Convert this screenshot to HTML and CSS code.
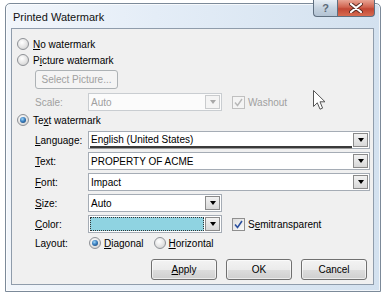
FILE: index.html
```html
<!DOCTYPE html>
<html>
<head>
<meta charset="utf-8">
<link rel="stylesheet" href="styles.css">
</head>
<body>
<div class="window">
  <div class="titlebar">
    <span class="title">Printed Watermark</span>
    <div class="caps">
      <span class="cap help">?</span>
      <span class="cap close"><svg width="14" height="10" viewBox="0 0 14 10"><path d="M2 1 L12 9 M12 1 L2 9" stroke="#5a2a22" stroke-width="4" stroke-linecap="round"/><path d="M2 1 L12 9 M12 1 L2 9" stroke="#fff" stroke-width="2.2" stroke-linecap="round"/></svg></span>
    </div>
  </div>
  <div class="client">
    <div class="radiorow"><span class="radio"></span><span><u>N</u>o watermark</span></div>
    <div class="radiorow"><span class="radio"></span><span>P<u>i</u>cture watermark</span></div>
    <div class="indent"><span class="btn disabled selbtn">Select Picture...</span></div>
    <div class="frow scale">
      <span class="lbl dim">Scale:</span>
      <span class="combo small dis"><span class="val">Auto</span><span class="drop"><i class="tri"></i></span></span>
      <span class="check dis"><svg width="9" height="9" viewBox="0 0 9 9"><path d="M1 4.5 L3.5 7.5 L8 1" fill="none" stroke="#b8b8b8" stroke-width="1.4"/></svg></span>
      <span class="dim">Washout</span>
    </div>
    <div class="radiorow tw"><span class="radio on"></span><span>Te<u>x</u>t watermark</span></div>
    <div class="form">
      <div class="frow"><span class="lbl"><u>L</u>anguage:</span><span class="combo wide"><span class="val lang">English (United States)</span><span class="drop"><i class="tri"></i></span></span></div>
      <div class="frow"><span class="lbl"><u>T</u>ext:</span><span class="combo wide"><span class="val">PROPERTY OF ACME</span><span class="drop"><i class="tri"></i></span></span></div>
      <div class="frow"><span class="lbl"><u>F</u>ont:</span><span class="combo wide"><span class="val">Impact</span><span class="drop"><i class="tri"></i></span></span></div>
      <div class="frow"><span class="lbl"><u>S</u>ize:</span><span class="combo small"><span class="val">Auto</span><span class="drop"><i class="tri"></i></span></span></div>
      <div class="frow"><span class="lbl"><u>C</u>olor:</span><span class="combo small"><span class="val color"><span class="swatch"></span></span><span class="drop"><i class="tri"></i></span></span>
        <span class="check"><svg width="9" height="9" viewBox="0 0 9 9"><path d="M1 4.5 L3.5 7.5 L8 1" fill="none" stroke="#2a4f9e" stroke-width="1.6"/></svg></span>
        <span>S<u>e</u>mitransparent</span>
      </div>
    </div>
    <div class="frow layout">
      <span class="lbl">Layout:</span>
      <span class="radio on"></span><span class="rl"><u>D</u>iagonal</span>
      <span class="radio h"></span><span class="rl"><u>H</u>orizontal</span>
    </div>
    <div class="buttons">
      <span class="btn"><u>A</u>pply</span>
      <span class="btn">OK</span>
      <span class="btn">Cancel</span>
    </div>
  </div>
</div>
<svg class="cursor" width="14" height="21" viewBox="0 0 14 21"><path d="M0.5 0.5 L0.5 16.5 L4.3 12.8 L7 19.2 L9.6 18.1 L7 11.8 L12 11.8 Z" fill="#fff" stroke="#555" stroke-width="1" stroke-linejoin="round"/></svg>
</body>
</html>
```
FILE: styles.css
```css
html, body { margin: 0; padding: 0; }
body {
  width: 384px; height: 296px; overflow: hidden; background: #fff;
  font-family: "Liberation Sans", Arial, sans-serif; font-size: 10px; color: #000;
  position: relative;
}
u { text-decoration: underline; text-underline-offset: 1px; }
.window {
  margin: 3px 0 0 5px; width: 363px; height: 287px;
  border: 1px solid #7c8a99; border-radius: 5px 5px 0 0;
  background: linear-gradient(to right, #f2f6fb 0%, #e4edf7 40%, #d3e1ef 100%);
  padding: 0 6px 0 5px; box-sizing: content-box;
  position: relative;
  box-shadow: inset 0 0 0 1px rgba(255,255,255,0.7);
}
.titlebar { height: 24px; display: flex; align-items: center; position: relative; }
.title { font-size: 11px; padding-left: 2px; padding-top: 1px; color: #111; }
.caps { position: absolute; right: -1px; top: -4px; display: flex; }
.cap { height: 17px; display: flex; align-items: center; justify-content: center; border: 1px solid #5f6f80; border-top: none; box-sizing: border-box; }
.help { width: 24px; border-radius: 0 0 0 4px; background: linear-gradient(#e8eef5, #c5d2df 50%, #b3c3d3); color: #5d6a78; font-size: 11px; font-weight: bold; border-right: none; }
.close { width: 38px; border-radius: 0 0 4px 0; background: linear-gradient(#e8a493, #d0634f 45%, #c24734 55%, #d76b50); }
.client {
  height: 248px; border: 1px solid #8f9cab; background: #f0f0f0;
  padding: 7px 0 0 5px; box-sizing: content-box;
  display: flex; flex-direction: column;
}
.radiorow { height: 16px; display: flex; align-items: center; }
.radiorow .radio { margin-right: 4px; }
.radio {
  width: 12px; height: 12px; border-radius: 50%; box-sizing: border-box;
  border: 1px solid #8e9196; flex: none;
  background: radial-gradient(circle at 40% 35%, #ffffff 0%, #e6e6e6 50%, #c9c9c9 100%);
  display: flex; align-items: center; justify-content: center;
}
.radio.on::after {
  content: ""; width: 6px; height: 6px; border-radius: 50%;
  background: radial-gradient(circle at 40% 35%, #9fd6f7 0%, #3a7fc0 45%, #14385f 100%);
}
.indent { padding-left: 18px; margin-top: 2px; }
.btn {
  display: inline-flex; align-items: center; justify-content: center;
  height: 21px; width: 66px; box-sizing: border-box;
  border: 1px solid #707070; border-radius: 3px;
  background: linear-gradient(#f3f3f3 0%, #ebebeb 50%, #dddddd 51%, #cfcfcf 100%);
  box-shadow: inset 0 0 0 1px rgba(255,255,255,0.6);
}
.btn.disabled { border-color: #adb2b5; background: #f4f4f4; color: #a0a0a0; box-shadow: none; }
.selbtn { width: 83px; height: 19px; }
.frow { display: flex; align-items: center; height: 18px; padding-left: 18px; }
.scale { margin-top: 4px; }
.tw { margin-top: 1px; }
.lbl { width: 53px; flex: none; }
.dim { color: #a0a0a0; }
.form { display: flex; flex-direction: column; gap: 3px; margin-top: 3px; }
.combo {
  height: 18px; box-sizing: border-box; border: 1px solid #a5acb5; background: #fff;
  display: flex; align-items: center; padding: 1px; flex: none;
}
.combo.wide { width: 282px; }
.combo.small { width: 134px; }
.val { flex: 1; height: 100%; display: flex; align-items: center; padding-left: 1px; box-sizing: border-box; }
.lang { border-bottom: 2px solid #3a3a3a; box-shadow: 0 1px 0 #9a9a9a; height: 15px; }
.color { padding: 0; }
.swatch { display: block; width: 100%; height: 100%; box-sizing: border-box; border: 1px dotted #333; background: #8fd3e1; }
.drop {
  width: 15px; height: 14px; box-sizing: border-box; border: 1px solid #8a8a8a; margin-left: 1px;
  background: linear-gradient(#f2f2f2, #d8d8d8);
  display: flex; align-items: center; justify-content: center;
}
.tri { width: 0; height: 0; border-left: 3.5px solid transparent; border-right: 3.5px solid transparent; border-top: 4px solid #000; }
.combo.dis { border-color: #c9cdd1; background: #fbfbfb; }
.combo.dis .val { color: #a0a0a0; }
.combo.dis .drop { border-color: #c9cbcd; background: #f4f4f4; }
.combo.dis .tri { border-top-color: #a8a8a8; }
.check {
  width: 13px; height: 13px; box-sizing: border-box; border: 1px solid #8f8f8f;
  background: linear-gradient(135deg, #dcdcdc, #fafafa);
  margin-left: 10px; margin-right: 3px; flex: none;
  display: flex; align-items: center; justify-content: center;
}
.check.dis { border-color: #c0c0c0; background: #f4f4f4; }
.layout { margin-top: 2px; height: 16px; }
.layout .radio { margin-left: 1px; margin-right: 3px; }
.layout .radio.h { margin-left: 10px; }
.buttons { display: flex; justify-content: flex-end; gap: 9px; padding-right: 6px; margin-top: 8px; }
.cursor { position: absolute; left: 313px; top: 90px; }
```
